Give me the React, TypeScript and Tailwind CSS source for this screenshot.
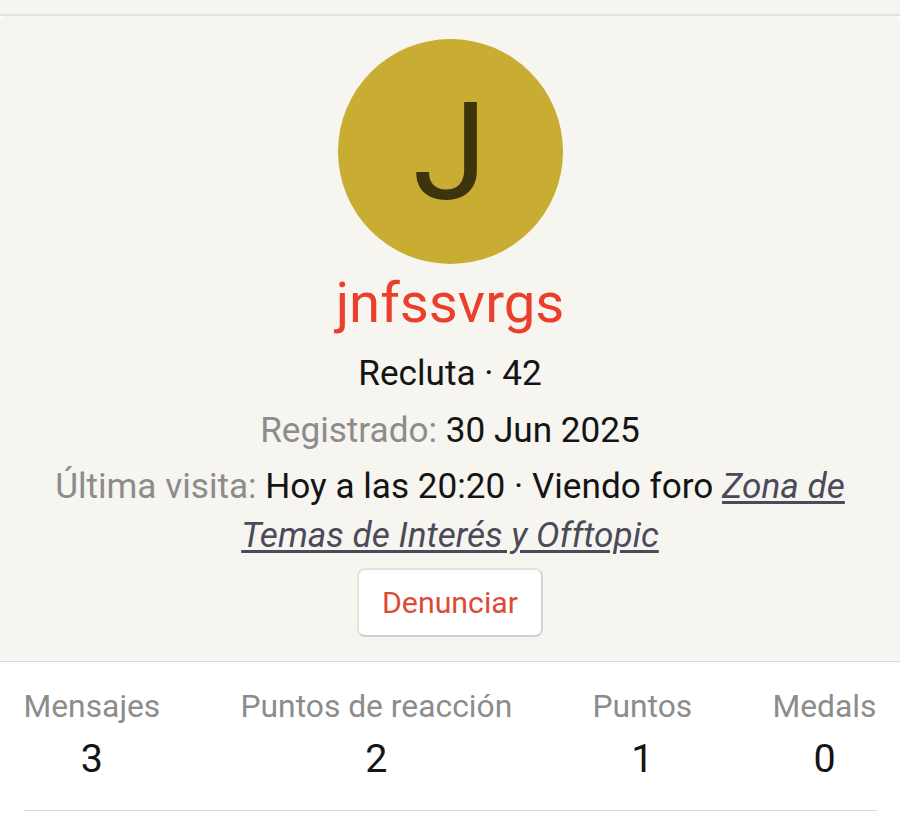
interface Stat {
  label: string
  value: number
}

const stats: Stat[] = [
  { label: 'Mensajes', value: 3 },
  { label: 'Puntos de reacción', value: 2 },
  { label: 'Puntos', value: 1 },
  { label: 'Medals', value: 0 }
]

export default function App() {
  return (
    <div className="h-[819px] w-[900px] overflow-hidden bg-white font-['Roboto',sans-serif] text-[#141414]">
      <div className="h-4 border-b-2 border-[#e2e1dd] bg-[#f6f5f0]" />

      {/* Member header */}
      <div className="flex h-[646px] flex-col items-center rounded-t-[5px] border-b border-[#d9d9d9] bg-[#f6f5f0] pt-[23px] text-center">
        <div className="flex size-[225px] shrink-0 items-center justify-center rounded-full bg-[#c9ac32] pt-[3px] text-[135px] leading-none text-[#3d330c]">
          J
        </div>
        <h4 className="text-[56.3px] leading-[79px] text-[#eb3f2c]">jnfssvrgs</h4>
        <div className="mt-[6px] text-[35.15px] leading-[49px]">Recluta · 42</div>
        <div className="mt-[8px] text-[35.15px] leading-[49px]">
          <span className="text-[#8c8c8c]">Registrado:</span> 30 Jun 2025
        </div>
        <div className="mt-[7px] w-[852px] text-[35.15px] leading-[49px]">
          <span className="text-[#8c8c8c]">Última visita:</span> Hoy a las 20:20 · Viendo foro{' '}
          <a href="#" className="text-[#4b4a58] italic underline decoration-[3px] underline-offset-[3px]">
            Zona de Temas de Interés y Offtopic
          </a>
        </div>
        <button className="mt-[8px] h-[69px] w-[186px] rounded-[8px] border-2 border-t-[#e3e3e0] border-r-[#d4d4d4] border-b-[#cfcfcf] border-l-[#e3e3e0] bg-white text-[30.3px] text-[#dc4a35]">
          Denunciar
        </button>
      </div>

      {/* Counters */}
      <div className="mx-[23.5px] flex h-[149px] justify-between border-b border-[#d9d9d9] pt-[23px] text-center">
        {stats.map((stat) => (
          <dl key={stat.label}>
            <dt className="text-[31.8px] leading-[42px] text-[#8c8c8c]">{stat.label}</dt>
            <dd className="pt-[2px] text-[39.5px] leading-[60px]">{stat.value}</dd>
          </dl>
        ))}
      </div>
    </div>
  )
}
